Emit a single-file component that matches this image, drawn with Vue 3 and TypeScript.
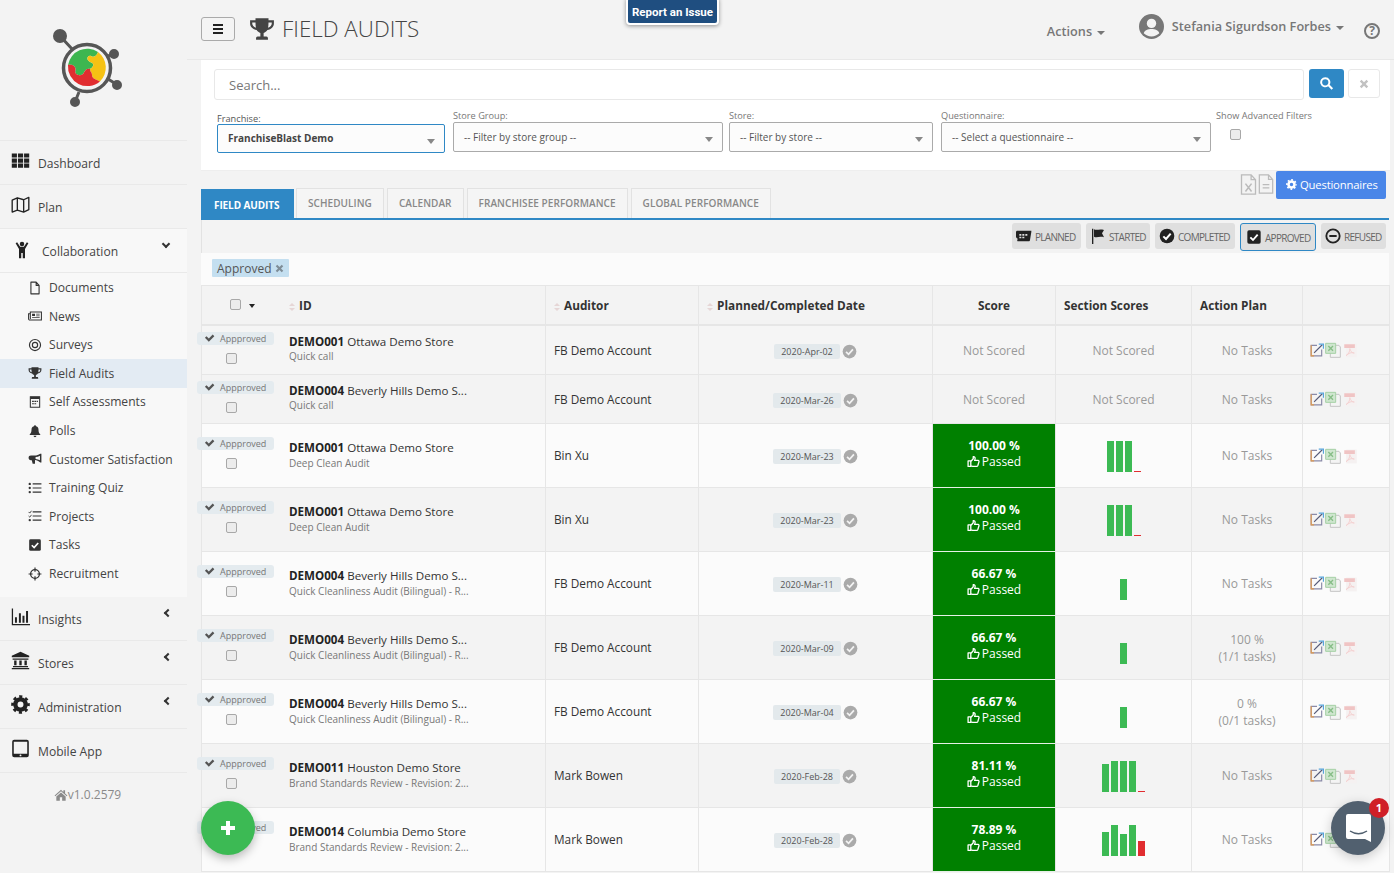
<script setup lang="ts">
interface NavItem { label: string; icon: string; chevron?: string; open?: boolean }
interface Bar { h: number; red?: boolean }
interface Row {
  id: string; store: string; sub: string; auditor: string; date: string;
  score?: string; bars?: Bar[]; plan?: string[]; tall: boolean; tone: string;
}

const topNav: NavItem[] = [
  { label: 'Dashboard', icon: 'i-th' },
  { label: 'Plan', icon: 'i-map' },
]
const subNav = [
  { label: 'Documents', icon: 'i-file' },
  { label: 'News', icon: 'i-news' },
  { label: 'Surveys', icon: 'i-bullseye' },
  { label: 'Field Audits', icon: 'i-trophy', active: true },
  { label: 'Self Assessments', icon: 'i-cal' },
  { label: 'Polls', icon: 'i-bell' },
  { label: 'Customer Satisfaction', icon: 'i-horn' },
  { label: 'Training Quiz', icon: 'i-list' },
  { label: 'Projects', icon: 'i-tasks' },
  { label: 'Tasks', icon: 'i-checksq' },
  { label: 'Recruitment', icon: 'i-cross' },
]
const lowerNav: NavItem[] = [
  { label: 'Insights', icon: 'i-chart', chevron: 'left' },
  { label: 'Stores', icon: 'i-bank', chevron: 'left' },
  { label: 'Administration', icon: 'i-cog', chevron: 'left' },
  { label: 'Mobile App', icon: 'i-tablet' },
]
const filters = [
  { cls: 'fa', label: 'Franchise:', value: 'FranchiseBlast Demo' },
  { cls: 'fb', label: 'Store Group:', value: '-- Filter by store group --' },
  { cls: 'fc', label: 'Store:', value: '-- Filter by store --' },
  { cls: 'fd', label: 'Questionnaire:', value: '-- Select a questionnaire --' },
]
const tabs = ['SCHEDULING', 'CALENDAR', 'FRANCHISEE PERFORMANCE', 'GLOBAL PERFORMANCE']
const statuses = [
  { label: 'PLANNED', icon: 'i-planned' },
  { label: 'STARTED', icon: 'i-flag' },
  { label: 'COMPLETED', icon: 'i-okcircle' },
  { label: 'APPROVED', icon: 'i-checksq', active: true },
  { label: 'REFUSED', icon: 'i-minus' },
]
const full: Bar[] = [{ h: 31 }, { h: 31 }, { h: 31 }, { h: 1, red: true }]
const one: Bar[] = [{ h: 21 }]
const qc = 'Quick Cleanliness Audit (Bilingual) - R...'
const bs = 'Brand Standards Review - Revision: 2...'
const bev = 'Beverly Hills Demo S...'
const rows: Row[] = [
  { id: 'DEMO001', store: 'Ottawa Demo Store', sub: 'Quick call', auditor: 'FB Demo Account', date: '2020-Apr-02', tall: false, tone: 'mid' },
  { id: 'DEMO004', store: bev, sub: 'Quick call', auditor: 'FB Demo Account', date: '2020-Mar-26', tall: false, tone: 'dark' },
  { id: 'DEMO001', store: 'Ottawa Demo Store', sub: 'Deep Clean Audit', auditor: 'Bin Xu', date: '2020-Mar-23', score: '100.00 %', bars: full, tall: true, tone: 'light' },
  { id: 'DEMO001', store: 'Ottawa Demo Store', sub: 'Deep Clean Audit', auditor: 'Bin Xu', date: '2020-Mar-23', score: '100.00 %', bars: full, tall: true, tone: 'dark' },
  { id: 'DEMO004', store: bev, sub: qc, auditor: 'FB Demo Account', date: '2020-Mar-11', score: '66.67 %', bars: one, tall: true, tone: 'light' },
  { id: 'DEMO004', store: bev, sub: qc, auditor: 'FB Demo Account', date: '2020-Mar-09', score: '66.67 %', bars: one, plan: ['100 %', '(1/1 tasks)'], tall: true, tone: 'dark' },
  { id: 'DEMO004', store: bev, sub: qc, auditor: 'FB Demo Account', date: '2020-Mar-04', score: '66.67 %', bars: one, plan: ['0 %', '(0/1 tasks)'], tall: true, tone: 'light' },
  { id: 'DEMO011', store: 'Houston Demo Store', sub: bs, auditor: 'Mark Bowen', date: '2020-Feb-28', score: '81.11 %', bars: [{ h: 28 }, { h: 31 }, { h: 31 }, { h: 31 }, { h: 1, red: true }], tall: true, tone: 'dark' },
  { id: 'DEMO014', store: 'Columbia Demo Store', sub: bs, auditor: 'Mark Bowen', date: '2020-Feb-28', score: '78.89 %', bars: [{ h: 24 }, { h: 31 }, { h: 22 }, { h: 31 }, { h: 15, red: true }], tall: true, tone: 'light' },
]
</script>

<template>
  <svg class="defs" aria-hidden="true">
    <symbol id="i-th" viewBox="0 0 24 24"><path d="M1 3h6.500v5.300H1zM8.800 3h6.500v5.300H8.800zM16.500 3H23v5.300h-6.500zM1 9.400h6.500v5.300H1zM8.800 9.400h6.500v5.300H8.800zM16.500 9.400H23v5.300h-6.500zM1 15.800h6.500v5.300H1zM8.800 15.800h6.500v5.300H8.800zM16.500 15.800H23v5.300h-6.500z"/></symbol>
    <symbol id="i-map" viewBox="0 0 24 24"><path d="M1.500 6.500 8 3.500l8 2.500 6.500-3v15.500L16 21.500l-8-2.500-6.500 2.500zM8 3.500V19M16 6v15.500" fill="none" stroke="currentColor" stroke-width="1.700" stroke-linejoin="round"/></symbol>
    <symbol id="i-child" viewBox="0 0 24 24"><circle cx="12" cy="4" r="3"/><path d="M3.500 3 5.500 1.800 9.500 7.500h5L18.500 1.800 20.500 3 16 10.500V23h-3v-7h-2v7H8V10.500z"/></symbol>
    <symbol id="i-file" viewBox="0 0 24 24"><path d="M5 2h9l5 5.500V22H5zM14 2v5.500h5" fill="none" stroke="currentColor" stroke-width="1.900" stroke-linejoin="round"/></symbol>
    <symbol id="i-news" viewBox="0 0 24 24"><path d="M4 5h19v14H3c-1 0-2-1-2-2V8h3zM4 8v9" fill="none" stroke="currentColor" stroke-width="1.800"/><path d="M7 8h5v4H7zM14 8h6v1.500h-6zM14 11h6v1.500h-6zM7 14h13v1.500H7z"/></symbol>
    <symbol id="i-bullseye" viewBox="0 0 24 24"><circle cx="12" cy="12" r="9.500" fill="none" stroke="currentColor" stroke-width="2"/><circle cx="12" cy="12" r="4.500" fill="none" stroke="currentColor" stroke-width="2"/></symbol>
    <symbol id="i-trophy" viewBox="0 0 24 24"><path fill-rule="evenodd" d="M6 2h12v2h5v3c0 3-2.500 5.500-6 6-.8 1.300-2.200 2.300-3.500 2.600V19H16c1 0 1.500 .8 1.500 1.800V22h-11v-1.200c0-1 .5-1.800 1.500-1.800h2.500v-3.400C9.200 15.300 7.800 14.300 7 13c-3.500-.5-6-3-6-6V4h5zM3 6v1c0 1.700 1.300 3.300 3.400 3.900C6.100 9.500 6 7.800 6 6zM18 6c0 1.800-.1 3.500-.4 4.900C19.700 10.300 21 8.700 21 7V6z"/></symbol>
    <symbol id="i-cal" viewBox="0 0 24 24"><path d="M4 3h16v18H4z" fill="none" stroke="currentColor" stroke-width="1.800"/><path d="M4 3h16v4H4zM7 10h3v2H7zM11 10h3v2h-3zM15 10h2v2h-2zM7 14h3v2H7zM11 14h3v2h-3z"/></symbol>
    <symbol id="i-bell" viewBox="0 0 24 24"><path d="M12 2a1.800 1.800 0 0 1 1.800 1.900C17 4.800 18 7 18 10c0 4 1 6 3 7.500V19H3v-1.500C5 16 6 14 6 10c0-3 1-5.200 4.200-6.100A1.800 1.800 0 0 1 12 2zM9.500 20h5a2.500 2.500 0 0 1-5 0z"/></symbol>
    <symbol id="i-horn" viewBox="0 0 24 24"><path fill-rule="evenodd" d="M23 3v15h-2c-3-3-6-4.200-9-4.500V20H8l-1.500-6H5c-2.500 0-4-1.500-4-4s1.500-4 4-4h6c4 0 7-1 10-3zM20.500 6.300c-2.200 1.300-4.700 2-7.500 2.300v3.300c2.800.3 5.300 1 7.500 2.300z"/></symbol>
    <symbol id="i-list" viewBox="0 0 24 24"><circle cx="3" cy="5" r="2"/><circle cx="3" cy="12" r="2"/><circle cx="3" cy="19" r="2"/><path d="M8 4h15v2H8zM8 11h15v2H8zM8 18h15v2H8z"/></symbol>
    <symbol id="i-tasks" viewBox="0 0 24 24"><path d="M1 5l2 2 3-4M1 12l2 2 3-4" fill="none" stroke="currentColor" stroke-width="1.500"/><circle cx="3" cy="19" r="2"/><path d="M8 4h15v2H8zM8 11h15v2H8zM8 18h15v2H8z"/></symbol>
    <symbol id="i-checksq" viewBox="0 0 24 24"><rect x="2" y="2" width="20" height="20" rx="2.500"/><path d="M6.500 12.500l4 4 7-8" fill="none" stroke="#fff" stroke-width="2.800"/></symbol>
    <symbol id="i-cross" viewBox="0 0 24 24"><circle cx="12" cy="12" r="7.500" fill="none" stroke="currentColor" stroke-width="2.200"/><path d="M11 1h2v7h-2zM11 16h2v7h-2zM1 11h7v2H1zM16 11h7v2h-7z"/></symbol>
    <symbol id="i-chart" viewBox="0 0 24 24"><path d="M1 2h1.600v19.400H24V23H1zM5 13h2.500v7H5zM10 8h2.500v12H10zM14.500 11H17v9h-2.500zM19 5h2.500v15H19z"/></symbol>
    <symbol id="i-bank" viewBox="0 0 24 24"><path d="M12 1 23 6v2H1V6zM2 9.500h20v1.500H2zM4 12h3v6H4zM10.500 12h3v6h-3zM17 12h3v6h-3zM2.500 19h19v1.500h-19zM1 21.500h22V23H1z"/></symbol>
    <symbol id="i-cog" viewBox="0 0 24 24"><circle cx="12" cy="12" r="6.500" fill="none" stroke="currentColor" stroke-width="5.500"/><circle cx="12" cy="12" r="10" fill="none" stroke="currentColor" stroke-width="3.500" stroke-dasharray="3.930 3.930" stroke-dashoffset="2"/></symbol>
    <symbol id="i-tablet" viewBox="0 0 24 24"><path fill-rule="evenodd" d="M4 1h16a2.500 2.500 0 0 1 2.500 2.500v17A2.500 2.500 0 0 1 20 23H4a2.500 2.500 0 0 1-2.500-2.500v-17A2.500 2.500 0 0 1 4 1zM3.500 3.500v15h17v-15zM12 19.500a1.200 1.200 0 1 0 0 2.400 1.200 1.200 0 0 0 0-2.400z"/></symbol>
    <symbol id="i-home" viewBox="0 0 24 24"><path d="M12 3 1 13l1.200 1.300L12 5.500l9.800 8.800L23 13l-4-3.600V4h-3v2.700zM12 7.500 4 14.500V22h6v-6h4v6h6v-7.500z"/></symbol>
    <symbol id="i-check" viewBox="0 0 24 24"><path d="M2 12.500l3.500-3.500 5 5L19 5.500l3.500 3.500-12 12z"/></symbol>
    <symbol id="i-search" viewBox="0 0 24 24"><path d="M10 2a8 8 0 1 0 4.600 14.500l5.500 5.500 2.400-2.400-5.500-5.500A8 8 0 0 0 10 2zm0 3a5 5 0 1 1 0 10 5 5 0 0 1 0-10z"/></symbol>
    <symbol id="i-times" viewBox="0 0 24 24"><path d="M6 2 12 8l6-6 4 4-6 6 6 6-4 4-6-6-6 6-4-4 6-6-6-6z"/></symbol>
    <symbol id="i-thumb" viewBox="0 0 24 24"><path d="M2 11h5v10H2zM7 12l4.500-5V3c2.500-.5 3.500 1.500 3.500 3.500 0 1-.5 2.500-1 3.500h6.500c1.500 0 2 1.500 1.500 3l-2 6.500c-.4 1-1 1.500-2 1.500H11c-1.500 0-2.500-1-4-1" fill="none" stroke="currentColor" stroke-width="2.400" stroke-linejoin="round"/></symbol>
    <symbol id="i-okcircle" viewBox="0 0 24 24"><circle cx="12" cy="12" r="11"/><path d="M6.500 12.500l4 4 7-8" fill="none" stroke="#fff" stroke-width="3"/></symbol>
    <symbol id="i-okgray" viewBox="0 0 24 24"><circle cx="12" cy="12" r="11"/><path d="M6.500 12.500l4 4 7-8" fill="none" stroke="#f3f3f3" stroke-width="2.800"/></symbol>
    <symbol id="i-minus" viewBox="0 0 24 24"><circle cx="12" cy="12" r="10" fill="none" stroke="currentColor" stroke-width="2.800"/><path d="M6.500 10.500h11v3h-11z"/></symbol>
    <symbol id="i-flag" viewBox="0 0 24 24"><path d="M3 1h2v23H3zM6 2c4 2 8-1 15 1l-3 5 3 6c-6-2-11 1-15-1z"/></symbol>
    <symbol id="i-planned" viewBox="0 0 24 24"><path fill-rule="evenodd" d="M2 4h21v2l-2 12c0 1-1 2-2 2H3c-1 0-1.500-1-1-2l.5-2C1 15 0 14 0 13V6c0-1 1-2 2-2zM5 9v2.500h3V9zM9.500 9v2.500h3V9zM14 9v2.500h3V9zM5 13v2.500h3V13zM9.500 13v2.500h3V13z"/></symbol>
    <symbol id="i-xls" viewBox="0 0 24 24"><path d="M4 1h11l5 5.500V23H4zM15 1v5.500h5" fill="none" stroke="currentColor" stroke-width="1.500"/><path d="M8.500 11l7 9M15.500 11l-7 9" stroke="currentColor" stroke-width="1.800"/></symbol>
    <symbol id="i-doc" viewBox="0 0 24 24"><path d="M4 1h11l5 5.500V23H4zM15 1v5.500h5" fill="none" stroke="currentColor" stroke-width="1.500"/><path d="M8 12h8v1.500H8zM8 16h8v1.500H8z"/></symbol>
    <symbol id="i-ext" viewBox="0 0 24 24"><path d="M12 4H2v18h18V11" fill="none" stroke="#8a8aa8" stroke-width="2"/><path d="M2 4v18h5" fill="none" stroke="#e09a50" stroke-width="2"/><path d="M7 17 21 3" stroke="#555a78" stroke-width="2"/><path d="M15 2h8v8" fill="none" stroke="#57a5dd" stroke-width="2"/></symbol>
    <symbol id="i-excel" viewBox="0 0 24 24"><path d="M8 5h13l2 2.500V23H8z" fill="#f4f4f4" stroke="#c4c4c4" stroke-width="1.500"/><path d="M1 2h15v15H1z" fill="#cfe6cf" stroke="#a5d0a5" stroke-width="1.500"/><path d="M5 6l7 7M12 6l-7 7" stroke="#86bd86" stroke-width="2"/></symbol>
    <symbol id="i-pdf" viewBox="0 0 24 24"><path d="M5 1h17v22H5z" fill="#f5f1f1"/><path d="M2 2h17v6H2z" fill="#f0c4c4"/><path d="M11 9c0 5-3 10-6 11 3-3 9-6 13-4-3 1-6-3-7-7z" fill="none" stroke="#f3cfcf" stroke-width="1.500"/></symbol>
  </svg>

  <div class="app">
    <aside class="sidebar">
      <div class="logo">
        <svg width="90" height="95" viewBox="40 20 90 95">
          <g stroke="#565656" stroke-width="3" fill="#565656">
            <path d="M60 36 73 50M110 55 105 58M116 84 108 79M75 102 79 92"/>
            <circle cx="60" cy="36" r="5.500"/>
            <circle cx="114" cy="54" r="3.500"/>
            <circle cx="117" cy="85" r="3.500"/>
            <circle cx="75" cy="102" r="3.500"/>
          </g>
          <circle cx="87" cy="68" r="23.500" fill="#f3f3f3" stroke="#565656" stroke-width="3.500"/>
          <path fill="#3db650" d="M68 65A19.500 19.500 0 0 1 98 52C97 56 93 58 91 56C87 55 86 60 90 62C93 63 94 64 93 66C92 68 91 68 90 69C85 68 85 72 83 74C79 77 74 74 75.500 70C76 66 72 64 68 65Z"/>
          <path fill="#f6c214" d="M98 52A19.500 19.500 0 0 1 100 81.500C96 79 92 79 92 75C92 72 90 72 90 69C91 68 92 68 93 66C94 64 93 63 90 62C86 60 87 55 91 56C93 58 97 56 98 52Z"/>
          <path fill="#e12d30" d="M68 65C72 64 76 66 75.500 70C74 74 79 77 83 74C85 72 85 68 90 69C90 72 92 72 92 75C92 79 96 79 100 81.500A19.500 19.500 0 0 1 68 65Z"/>
        </svg>
      </div>
      <nav>
        <a v-for="n in topNav" :key="n.label" class="nav-item">
          <svg class="nav-icon"><use :href="'#' + n.icon" /></svg>{{ n.label }}
        </a>
        <a class="nav-item open">
          <svg class="nav-icon small"><use href="#i-child" /></svg>Collaboration
          <span class="chev down"></span>
        </a>
        <div class="sublist">
          <a v-for="s in subNav" :key="s.label" class="sub-item" :class="{ active: s.active }">
            <svg class="sub-icon"><use :href="'#' + s.icon" /></svg>{{ s.label }}
          </a>
        </div>
        <a v-for="n in lowerNav" :key="n.label" class="nav-item">
          <svg class="nav-icon"><use :href="'#' + n.icon" /></svg>{{ n.label }}
          <span v-if="n.chevron" class="chev left"></span>
        </a>
      </nav>
      <div class="version"><svg class="home"><use href="#i-home" /></svg>v1.0.2579</div>
    </aside>

    <main class="main">
      <header class="topbar">
        <button class="burger"><span></span><span></span><span></span></button>
        <svg class="title-icon"><use href="#i-trophy" /></svg>
        <h1>FIELD AUDITS</h1>
        <div class="top-right">
          <span class="actions">Actions<i class="caret"></i></span>
          <svg class="avatar" viewBox="0 0 24 24">
            <circle cx="12" cy="12" r="12" fill="#777" />
            <circle cx="12" cy="9" r="4.500" fill="#f3f3f3" />
            <path d="M4.500 18.500c1-3 4-4 7.500-4s6.500 1 7.500 4c-2 2-4.500 3-7.500 3s-5.500-1-7.500-3z" fill="#f3f3f3" />
          </svg>
          <span class="user">Stefania Sigurdson Forbes<i class="caret"></i></span>
          <span class="help">?</span>
        </div>
      </header>

      <section class="search-panel">
        <div class="search-row">
          <div class="search-input">Search...</div>
          <button class="search-btn"><svg><use href="#i-search" /></svg></button>
          <button class="clear-btn"><svg><use href="#i-times" /></svg></button>
        </div>
        <div class="filter-row">
          <div v-for="f in filters" :key="f.cls" class="filter" :class="f.cls">
            <label>{{ f.label }}</label>
            <div class="select">{{ f.value }}<i class="sel-caret"></i></div>
          </div>
          <div class="adv">
            <label>Show Advanced Filters</label>
            <input type="checkbox" class="cb" />
          </div>
        </div>
      </section>

      <div class="tools">
        <svg class="tool-icon"><use href="#i-xls" /></svg>
        <svg class="tool-icon doc"><use href="#i-doc" /></svg>
        <button class="q-btn"><svg><use href="#i-cog" /></svg>Questionnaires</button>
      </div>

      <div class="tabs">
        <span class="tab active">FIELD AUDITS</span>
        <span v-for="t in tabs" :key="t" class="tab">{{ t }}</span>
      </div>

      <div class="board">
        <div class="status-row">
          <span v-for="s in statuses" :key="s.label" class="status" :class="{ active: s.active }">
            <svg><use :href="'#' + s.icon" /></svg>{{ s.label }}
          </span>
        </div>
        <div class="chip-row">
          <span class="chip">Approved<svg><use href="#i-times" /></svg></span>
        </div>
        <table>
          <colgroup>
            <col class="c1" /><col class="c2" /><col class="c3" /><col class="c4" />
            <col class="c5" /><col class="c6" /><col class="c7" /><col class="c8" />
          </colgroup>
          <thead>
            <tr>
              <th class="th-sel"><input type="checkbox" class="cb" /><i class="sel-dn"></i></th>
              <th class="left id-h"><i class="sort"></i>ID</th>
              <th class="left"><i class="sort"></i>Auditor</th>
              <th class="left"><i class="sort"></i>Planned/Completed Date</th>
              <th>Score</th>
              <th class="left">Section Scores</th>
              <th class="left">Action Plan</th>
              <th></th>
            </tr>
          </thead>
          <tbody>
            <tr v-for="(r, i) in rows" :key="i" :class="[r.tone, r.tall ? 'tall' : 'short']">
              <td class="sel">
                <div class="approved"><svg><use href="#i-check" /></svg>Appproved</div>
                <input type="checkbox" class="cb" />
              </td>
              <td class="id-cell">
                <div class="name"><b>{{ r.id }}</b> {{ r.store }}</div>
                <div class="sub">{{ r.sub }}</div>
              </td>
              <td class="auditor">{{ r.auditor }}</td>
              <td class="date">
                <span class="pill">{{ r.date }}</span><svg class="ok"><use href="#i-okgray" /></svg>
              </td>
              <td v-if="r.score" class="score">
                <b>{{ r.score }}</b>
                <span><svg><use href="#i-thumb" /></svg>Passed</span>
              </td>
              <td v-else class="muted">Not Scored</td>
              <td v-if="r.bars" class="bars-cell">
                <div class="bars">
                  <i v-for="(b, k) in r.bars" :key="k" :class="{ red: b.red }" :style="{ height: b.h + 'px' }"></i>
                </div>
              </td>
              <td v-else class="muted">Not Scored</td>
              <td class="muted">
                <template v-if="r.plan">{{ r.plan[0] }}<br />{{ r.plan[1] }}</template>
                <template v-else>No Tasks</template>
              </td>
              <td class="row-actions">
                <svg class="a-ext"><use href="#i-ext" /></svg>
                <svg class="a-xl"><use href="#i-excel" /></svg>
                <svg class="a-pdf"><use href="#i-pdf" /></svg>
              </td>
            </tr>
          </tbody>
        </table>
      </div>
    </main>

    <div class="report">Report an Issue</div>
    <button class="fab" aria-label="Add"><span></span><span></span></button>
    <div class="chat">
      <svg width="28" height="30" viewBox="0 0 28 30">
        <path d="M3 1h21a2 2 0 0 1 2 2v26l-6-3H3a2 2 0 0 1-2-2V3a2 2 0 0 1 2-2z" fill="#fff" />
        <path d="M5 18c5 3.500 12 3.500 17 0" fill="none" stroke="#51606f" stroke-width="1.500" />
      </svg>
      <span class="badge">1</span>
    </div>
  </div>
</template>

<style>
html, body { margin: 0; height: 100%; overflow: hidden; background: #f3f3f3; }
</style>

<style scoped>
* { box-sizing: border-box; }
.defs { position: absolute; width: 0; height: 0; }
.app { display: flex; height: 873px; overflow: hidden; position: relative; background: #f3f3f3; font-family: "Open Sans", "Liberation Sans", sans-serif; color: #333; }

.sidebar { width: 187px; flex: none; }
.logo { height: 141px; padding: 20px 0 0 40px; border-bottom: 1px solid #e9e9e9; }
.logo svg { display: block; }
.nav-item { position: relative; display: flex; align-items: center; height: 44px; padding: 2px 0 0 38px; border-bottom: 1px solid #e9e9e9; font-size: 12.100px; color: #444; }
.nav-icon { position: absolute; left: 11px; top: 10px; width: 19px; height: 19px; color: #222; fill: currentColor; }
.nav-icon.small { left: 13px; top: 11px; width: 18px; height: 20px; }
.nav-item.open { background: #f8f8f8; padding-left: 42px; }
.chev { position: absolute; left: 163px; top: 13px; width: 6px; height: 6px; border-left: 2px solid #333; border-bottom: 2px solid #333; }
.chev.down { transform: rotate(-45deg); top: 12px; }
.chev.left { transform: rotate(45deg); left: 165px; }
.sublist { background: #f8f8f8; height: 324px; padding-top: .3px; }
.sub-item { display: flex; align-items: center; height: 28.600px; padding-left: 28px; font-size: 12.100px; color: #444; }
.sub-item.active { background: #e3ebf3; }
.sub-icon { width: 14px; height: 14px; margin-right: 7px; fill: currentColor; color: #333; }
.version { display: flex; align-items: center; justify-content: center; padding: 13px 12px 0 0; font-size: 12px; color: #8a8a8a; }
.home { width: 14px; height: 14px; fill: currentColor; }

.main { flex: 1; min-width: 0; padding: 0 4px 0 14px; }
.topbar { display: flex; align-items: flex-start; height: 60px; margin: 0 -4px 0 -14px; padding: 17px 0 0 14px; border-bottom: 1px solid #e8e8e8; }
.burger { display: flex; flex-direction: column; justify-content: center; align-items: center; gap: 2px; width: 34px; height: 24px; padding: 0; background: #f4f4f4; border: 1px solid #aaa; border-radius: 3px; }
.burger span { display: block; width: 10px; height: 2px; background: #222; }
.title-icon { width: 26px; height: 26px; margin: -1px 0 0 14px; fill: #444; }
h1 { margin: -2px 0 0 7px; font-size: 22.400px; line-height: 28px; font-weight: 300; color: #444; }
.top-right { display: flex; align-items: flex-start; margin-left: auto; color: #777; font-size: 12.700px; font-weight: 600; }
.actions { margin-top: 5px; width: 92px; }
.avatar { width: 25px; height: 25px; margin-top: -3px; }
.user { margin: 0 0 0 8px; }
.caret { display: inline-block; margin-left: 5px; vertical-align: middle; border: 4px solid transparent; border-top-color: #777; border-bottom: 0; }
.help { width: 16px; height: 16px; margin: 6px 14px 0 20px; border: 2px solid #777; border-radius: 50%; font-size: 12px; line-height: 12px; text-align: center; font-weight: 700; }

.search-panel { height: 111px; padding: 9px 0 0 13px; background: #fff; border-bottom: 1px solid #eee; }
.search-row { display: flex; align-items: flex-start; }
.search-input { width: 1090px; height: 31px; padding: 0 14px; border: 1px solid #e8e8e8; border-radius: 3px; font-size: 13px; line-height: 31px; color: #777; }
.search-btn { display: flex; align-items: center; justify-content: center; width: 35px; height: 29px; margin-left: 5px; padding: 0; background: #2f88c5; border: 0; border-radius: 3px; }
.search-btn svg { width: 15px; height: 15px; fill: #fff; }
.clear-btn { display: flex; align-items: center; justify-content: center; width: 32px; height: 29px; margin-left: 4px; padding: 0; background: #fff; border: 1px solid #e8e8e8; border-radius: 3px; }
.clear-btn svg { width: 10px; height: 10px; fill: #c2c2c2; }
.filter-row { display: flex; align-items: flex-start; margin: 10px 0 0 3px; }
.filter label { display: block; height: 12px; font-size: 9.200px; line-height: 12px; color: #777; }
.filter .select { position: relative; height: 30px; padding: 0 10px; border: 1px solid #aaa; border-radius: 2px; background: #fcfcfc; font-size: 10px; line-height: 28px; color: #555; }
.sel-caret { position: absolute; right: 9px; top: 14px; border: 4px solid transparent; border-top: 5px solid #888; border-bottom: 0; }
.fa { width: 228px; margin: 3px 8px 0 0; }
.fa label { height: 11px; color: #555; }
.fa .select { height: 29px; border-color: #2f88c5; font-weight: 700; color: #444; padding-left: 10px; line-height: 27px; }
.fb { width: 270px; margin-right: 6px; }
.fc { width: 204px; margin-right: 8px; }
.fd { width: 270px; margin-right: 5px; }
.adv label { display: block; font-size: 9.200px; line-height: 12px; color: #777; }
.adv { margin-top: 0; }
.cb { appearance: none; display: block; width: 11px; height: 11px; margin: 0; background: #ececec; border: 1px solid #a8a8a8; border-radius: 2px; }
.adv .cb { margin: 7px 0 0 14px; }

.tools { display: flex; justify-content: flex-end; align-items: center; height: 28px; margin: 0 4px -11px 0; }
.tool-icon { width: 21px; height: 21px; color: #bbb; fill: currentColor; margin: -2px -3px 0 0; }
.tool-icon.doc { margin: -2px 0 0 0; width: 20px; height: 20px; }
.q-btn { display: flex; align-items: center; gap: 3px; width: 110px; height: 28px; padding: 0 0 2px 10px; background: #4a86e8; border: 0; border-radius: 2px; color: #fff; font-family: inherit; font-size: 11.300px; letter-spacing: -.2px; white-space: nowrap; }
.q-btn svg { width: 11px; height: 11px; fill: currentColor; color: #fff; }

.tabs { display: flex; align-items: flex-end; gap: 3px; height: 30px; }
.tab { display: block; height: 30px; padding: 0 11px; border: 1px solid #e2e2e2; border-bottom: 0; font-size: 10px; line-height: 29px; font-weight: 600; letter-spacing: .065px; color: #888; background: #f5f5f5; }
.tab.active { width: 93px; height: 29px; margin-right: -1px; padding: 2px 0 0 13px; background: #2f88c5; border: 0; color: #fff; font-weight: 700; letter-spacing: -.1px; }

.board { width: 1188px; border-top: 2px solid #2f88c5; }
.status-row { display: flex; justify-content: flex-end; align-items: flex-start; gap: 5px; height: 33px; padding: 3px 3px 0 0; border-left: 1px solid #e2e2e2; }
.status { display: flex; align-items: center; gap: 3px; height: 26px; padding: 1px 4px 0; background: #dfdfdf; border-radius: 3px; font-size: 10px; letter-spacing: -.7px; color: #666; }
.status svg { width: 16px; height: 16px; margin-top: -1px; fill: currentColor; color: #222; flex: none; }
.status.active { height: 28px; padding: 1px 3px 0 5px; border: 1px solid #2f88c5; gap: 3px; }
.status:nth-child(1) { width: 69px; }
.status:nth-child(2) { width: 64px; }
.status:nth-child(3) { width: 80px; }
.status:nth-child(4) { width: 76px; }
.status:nth-child(5) { width: 65px; }
.chip-row { display: flex; align-items: flex-start; height: 32px; padding: 6px 0 0 11px; background: #fbfbfb; }
.chip { display: flex; align-items: center; gap: 4px; height: 18px; padding: 0 5px; background: #c4dff0; border-radius: 1px; font-size: 12px; color: #555; }
.chip svg { width: 9px; height: 9px; fill: #7e8c96; }

table { width: 1188px; table-layout: fixed; border-collapse: separate; border-spacing: 0; border-left: 1px solid #e6e6e6; }
.c1 { width: 80px; } .c2 { width: 264px; } .c3 { width: 153px; } .c4 { width: 234px; }
.c5 { width: 123px; } .c6 { width: 136px; } .c7 { width: 111px; } .c8 { width: 87px; }
th { height: 41px; border-top: 1px solid #e6e6e6; border-bottom: 2px solid #e6e6e6; border-right: 1px solid #e6e6e6; background: #f3f3f3; font-size: 11.800px; font-weight: 700; color: #333; text-align: center; padding: 0; }
th.left { text-align: left; padding-left: 8px; }
th.th-sel { border-right: 0; padding: 0 0 2px; }
th.th-sel .cb { display: inline-block; vertical-align: -1px; margin: 0 8px 0 0; }
th.id-h { padding-left: 7px; }
.sel-dn { display: inline-block; border: 3.500px solid transparent; border-top: 4px solid #222; border-bottom: 0; vertical-align: 1px; }
.sort { display: inline-block; position: relative; width: 6px; height: 8px; margin-right: 4px; vertical-align: -1px; }
.sort::before, .sort::after { content: ""; position: absolute; left: 0; border: 3px solid transparent; }
.sort::before { top: 0; border-bottom: 3px solid #e6d6d6; border-top: 0; }
.sort::after { top: 5px; border-top: 3px solid #e6d6d6; border-bottom: 0; }
td { border-bottom: 1px solid #e6e6e6; border-right: 1px solid #e6e6e6; font-size: 12px; text-align: center; color: #333; padding: 0; }
tr.short td { height: 49px; }
tr.tall td { height: 64px; }
tr.light td { background: #fbfbfb; }
tr.dark td { background: #f3f3f3; }
tr.mid td { background: #f5f5f5; }
td.sel { border-right: 0; position: relative; }
.sel .cb { margin: 8px auto 0 24px; }
.approved { display: flex; align-items: center; gap: 4px; width: 77px; height: 13px; margin: -5px 0 0 -5px; padding-left: 6px; position: relative; background: #e4ebef; border-radius: 3px; font-size: 9px; color: #777; }
.approved svg { width: 13px; height: 11px; fill: #555; margin-top: -2px; }
.id-cell { text-align: left; padding: 0 0 1px 7px; white-space: nowrap; }
tr.short .id-cell { padding-bottom: 3px; }
tr.short .sub { line-height: 13px; }
.name { font-size: 11.600px; color: #333; line-height: 16px; }
.name b { color: #222; }
.sub { font-size: 10px; line-height: 14px; color: #777; }
.auditor { text-align: left; padding-left: 8px; font-size: 11.800px; }
tr.tall .auditor { padding-bottom: 1px; }
.pill { display: inline-block; height: 15px; padding: 0 7px; background: #e3e9ec; border-radius: 2px; font-size: 9px; line-height: 15px; color: #555; vertical-align: middle; }
.ok { width: 15px; height: 15px; margin-left: 2px; fill: #aaa; vertical-align: middle; }
.muted { font-size: 12px; color: #999; }
.score { background: #008000 !important; color: #fff; border-bottom-color: #e6f0e6; line-height: 16px; padding-bottom: 4px; }
.score b { display: block; font-size: 12px; }
.score span { display: flex; align-items: center; justify-content: center; gap: 2px; font-size: 12px; color: #fff; }
.score svg { width: 13px; height: 13px; fill: currentColor; color: #fff; }
.bars { display: flex; align-items: flex-end; justify-content: center; gap: 2px; height: 31px; margin: 1px 0 0 0; }
.bars i { display: block; width: 7px; background: #3cba54; }
.bars i.red { background: #e12d30; }
.row-actions { text-align: left; padding: 0 0 2px 7px; white-space: nowrap; }
.row-actions svg { vertical-align: middle; }
.row-actions .a-xl, .row-actions .a-pdf { vertical-align: -5px; }
.a-ext { width: 14px; height: 14px; }
.a-xl { width: 16px; height: 16px; margin-left: 1px; }
.a-pdf { width: 15px; height: 15px; margin-left: 2px; }

.report { position: absolute; left: 626px; top: -3px; width: 93px; height: 28px; padding-top: 3px; background: #1f4e80; border: 2px solid #fff; border-radius: 4px; box-shadow: 0 1px 4px rgba(0,0,0,.4); color: #fff; font-family: Roboto, sans-serif; font-size: 11.500px; font-weight: 700; line-height: 20px; text-align: center; white-space: nowrap; }
.fab { position: absolute; left: 201px; top: 801px; width: 54px; height: 54px; padding: 0; background: #3cba54; border: 0; border-radius: 50%; box-shadow: 0 4px 10px rgba(0,0,0,.25); }
.fab span { position: absolute; left: 20px; top: 25px; width: 14px; height: 4px; background: #fff; }
.fab span + span { left: 25px; top: 20px; width: 4px; height: 14px; }
.chat { position: absolute; left: 1331px; top: 801px; display: flex; align-items: center; justify-content: center; width: 54px; height: 54px; padding: 0 0 0 1px; background: #51606f; border-radius: 50%; box-shadow: 0 3px 12px rgba(0,0,0,.2); }
.badge { position: absolute; left: 38px; top: -3px; width: 20px; height: 20px; background: #d01f27; border-radius: 50%; color: #fff; font-size: 11px; font-weight: 700; line-height: 20px; text-align: center; }
</style>
